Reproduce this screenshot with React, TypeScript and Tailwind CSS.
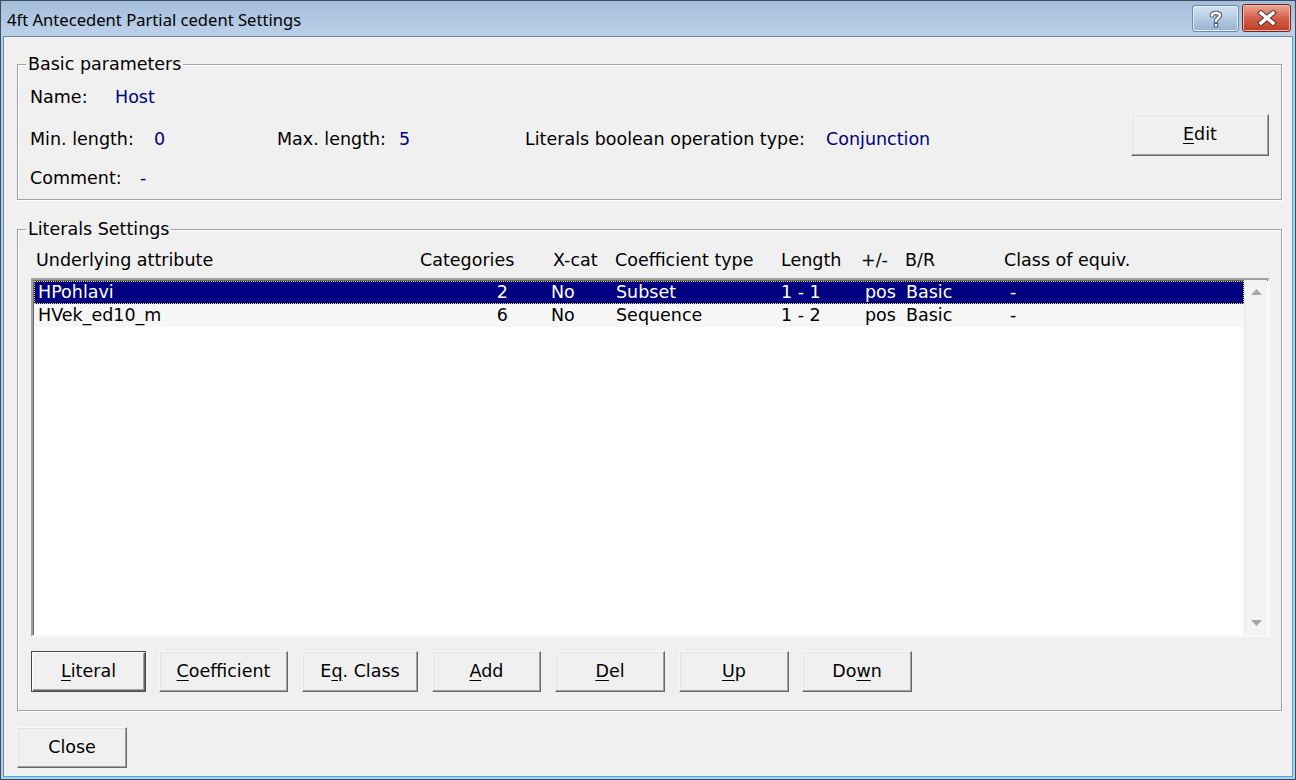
import React from 'react'

const ui = "font-['DejaVu_Sans',sans-serif] text-[17.5px] leading-[21px]"

interface BtnProps {
  children: React.ReactNode
  className?: string
  isDefault?: boolean
}

function Btn({ children, className = '', isDefault = false }: BtnProps) {
  return (
    <div
      className={`flex items-center justify-center bg-[#f0f0f0] text-black ${
        isDefault
          ? 'border border-[#4a4a4a] shadow-[inset_1px_1px_0_#ffffff,inset_-1px_-1px_0_#696969,inset_-2px_-2px_0_#a0a0a0]'
          : 'border border-t-[#f8f8f8] border-l-[#f8f8f8] border-r-[#696969] border-b-[#696969] shadow-[inset_-1px_-1px_0_#a0a0a0,inset_1px_1px_0_#e3e3e3]'
      } ${className}`}
    >
      {children}
    </div>
  )
}

function Key({ children }: { children: React.ReactNode }) {
  return <span className="underline decoration-1 underline-offset-[3px]">{children}</span>
}

const rows = [
  { name: 'HPohlavi', cat: '2', xcat: 'No', coef: 'Subset', len: '1 - 1', sign: 'pos', br: 'Basic', eq: '-' },
  { name: 'HVek_ed10_m', cat: '6', xcat: 'No', coef: 'Sequence', len: '1 - 2', sign: 'pos', br: 'Basic', eq: '-' }
]

export default function App() {
  return (
    <div className="w-[1296px] h-[780px] flex flex-col bg-[#b7cde5] border border-[#3a4d62]">
      {/* Title bar */}
      <div className="h-[35px] shrink-0 flex items-start bg-linear-to-b from-[#a4bdd9] to-[#bcd2e9]">
        <div className="pl-[6px] pt-[8px] font-['Noto_Sans',sans-serif] text-[16.6px] leading-[22px] text-black">
          4ft Antecedent Partial cedent Settings
        </div>
        <div className="ml-auto mt-[4px] mr-[4px] flex gap-[3px]">
          <div className="w-[47px] h-[27px] rounded-[3px] border border-[#6f8aa8] bg-linear-to-b from-[#d3e3f3] via-[#b4cbe3] to-[#97b2d0] flex items-center justify-center shadow-[inset_0_0_0_1px_#e5eef8]">
            <svg width="14" height="18" viewBox="0 0 14 18">
              <path d="M3 5.5 C3 2.5 11 2 11 5.5 C11 8 7 8 7 11" fill="none" stroke="#4a5866" strokeWidth="4.5" strokeLinecap="round" />
              <path d="M3 5.5 C3 2.5 11 2 11 5.5 C11 8 7 8 7 11" fill="none" stroke="#ffffff" strokeWidth="2.5" strokeLinecap="round" />
              <rect x="4.8" y="13" width="4.4" height="4.4" fill="#4a5866" />
              <rect x="5.8" y="14" width="2.4" height="2.4" fill="#ffffff" />
            </svg>
          </div>
          <div className="w-[49px] h-[28px] -mt-[1px] rounded-[3px] border border-[#7a2418] bg-linear-to-b from-[#e8a898] via-[#d4604a] to-[#c03a22] flex items-center justify-center shadow-[inset_0_0_0_1px_#efb9ab]">
            <svg width="20" height="16" viewBox="0 0 20 16">
              <path d="M4 3 L16 13 M16 3 L4 13" stroke="#5a2a24" strokeWidth="5.5" strokeLinecap="square" />
              <path d="M4 3 L16 13 M16 3 L4 13" stroke="#ffffff" strokeWidth="3.5" strokeLinecap="square" />
            </svg>
          </div>
        </div>
      </div>

      {/* Client area */}
      <div className={`flex-1 ml-[2px] mr-[2px] mb-[2px] bg-[#f0f0f0] border border-[#6b87a3] border-r-[#2fb4ea] border-b-[#2fb4ea] pl-[13px] pr-[10px] ${ui}`}>
        {/* Basic parameters */}
        <fieldset className="mt-[17px] h-[146px] border border-[#a0a0a0] shadow-[inset_1px_1px_0_#ffffff,1px_1px_0_#ffffff] px-[12px]">
          <legend className="-ml-[4px] px-[2px]">Basic parameters</legend>
          <div className="flex items-center">
            <div className="flex-1 flex flex-col pt-[12px]">
              <div className="flex">
                <span className="w-[85px]">Name:</span>
                <span className="text-[#000080]">Host</span>
              </div>
              <div className="flex mt-[21px]">
                <span className="w-[124px]">Min. length:</span>
                <span className="w-[123px] text-[#000080]">0</span>
                <span className="w-[122px]">Max. length:</span>
                <span className="w-[126px] text-[#000080]">5</span>
                <span className="w-[301px]">Literals boolean operation type:</span>
                <span className="text-[#000080]">Conjunction</span>
              </div>
              <div className="flex mt-[18px]">
                <span className="w-[110px]">Comment:</span>
                <span className="text-[#000080]">-</span>
              </div>
            </div>
            <Btn className="w-[138px] h-[42px] mt-[5px]">
              <span><Key>E</Key>dit</span>
            </Btn>
          </div>
        </fieldset>

        {/* Literals Settings */}
        <fieldset className="mt-[19px] h-[492px] border border-[#a0a0a0] shadow-[inset_1px_1px_0_#ffffff,1px_1px_0_#ffffff] pl-[13px] pr-[11px]">
          <legend className="-ml-[5px] px-[2px]">Literals Settings</legend>
          <div className="flex mt-[10px] pl-[5px] whitespace-nowrap">
            <span className="w-[384px]">Underlying attribute</span>
            <span className="w-[133px]">Categories</span>
            <span className="w-[62px]">X-cat</span>
            <span className="w-[166px]">Coefficient type</span>
            <span className="w-[80px]">Length</span>
            <span className="w-[44px]">+/-</span>
            <span className="w-[99px]">B/R</span>
            <span>Class of equiv.</span>
          </div>

          {/* List box */}
          <div className="mt-[7px] h-[359px] flex bg-white border-2 border-t-[#a0a0a0] border-l-[#a0a0a0] border-r-[#f8f8f8] border-b-[#f8f8f8] shadow-[inset_1px_1px_0_#696969]">
            <div className="flex-1 pt-[1px] pl-[1px]">
              {rows.map((r, i) => (
                <div
                  key={r.name}
                  className={`flex h-[23px] items-center whitespace-nowrap ${
                    i === 0
                      ? 'bg-[#000080] text-white border border-dotted border-[#f0e040]'
                      : 'bg-[#f6f6f6] text-black border border-transparent'
                  }`}
                >
                  <span className="w-[385px] pl-[3px]">{r.name}</span>
                  <span className="w-[90px] text-right pr-[2px]">{r.cat}</span>
                  <span className="w-[41px]" />
                  <span className="w-[65px]">{r.xcat}</span>
                  <span className="w-[165px]">{r.coef}</span>
                  <span className="w-[84px]">{r.len}</span>
                  <span className="w-[41px]">{r.sign}</span>
                  <span className="w-[104px]">{r.br}</span>
                  <span>{r.eq}</span>
                </div>
              ))}
            </div>
            {/* Scrollbar */}
            <div className="w-[23px] mr-[1px] flex flex-col justify-between bg-[#f3f3f3] border-l border-[#e6e6e6]">
              <div className="h-[24px] flex items-center justify-center">
                <svg width="11" height="6" viewBox="0 0 11 6">
                  <polygon points="5.5,0 11,6 0,6" fill="#a6a6a6" />
                </svg>
              </div>
              <div className="h-[24px] flex items-center justify-center">
                <svg width="11" height="6" viewBox="0 0 11 6">
                  <polygon points="0,0 11,0 5.5,6" fill="#a6a6a6" />
                </svg>
              </div>
            </div>
          </div>

          {/* Action buttons */}
          <div className="flex mt-[14px]">
            <Btn isDefault className="w-[115px] h-[41px]">
              <span><Key>L</Key>iteral</span>
            </Btn>
            <Btn className="w-[129px] h-[41px] ml-[13px]">
              <span><Key>C</Key>oefficient</span>
            </Btn>
            <Btn className="w-[116px] h-[41px] ml-[14px]">
              <span>E<Key>q</Key>. Class</span>
            </Btn>
            <Btn className="w-[109px] h-[41px] ml-[14px]">
              <span><Key>A</Key>dd</span>
            </Btn>
            <Btn className="w-[110px] h-[41px] ml-[14px]">
              <span><Key>D</Key>el</span>
            </Btn>
            <Btn className="w-[110px] h-[41px] ml-[14px]">
              <span><Key>U</Key>p</span>
            </Btn>
            <Btn className="w-[110px] h-[41px] ml-[13px]">
              <span>Do<Key>w</Key>n</span>
            </Btn>
          </div>
        </fieldset>

        <Btn className="w-[110px] h-[41px] mt-[16px]">
          <span>Close</span>
        </Btn>
      </div>
    </div>
  )
}
